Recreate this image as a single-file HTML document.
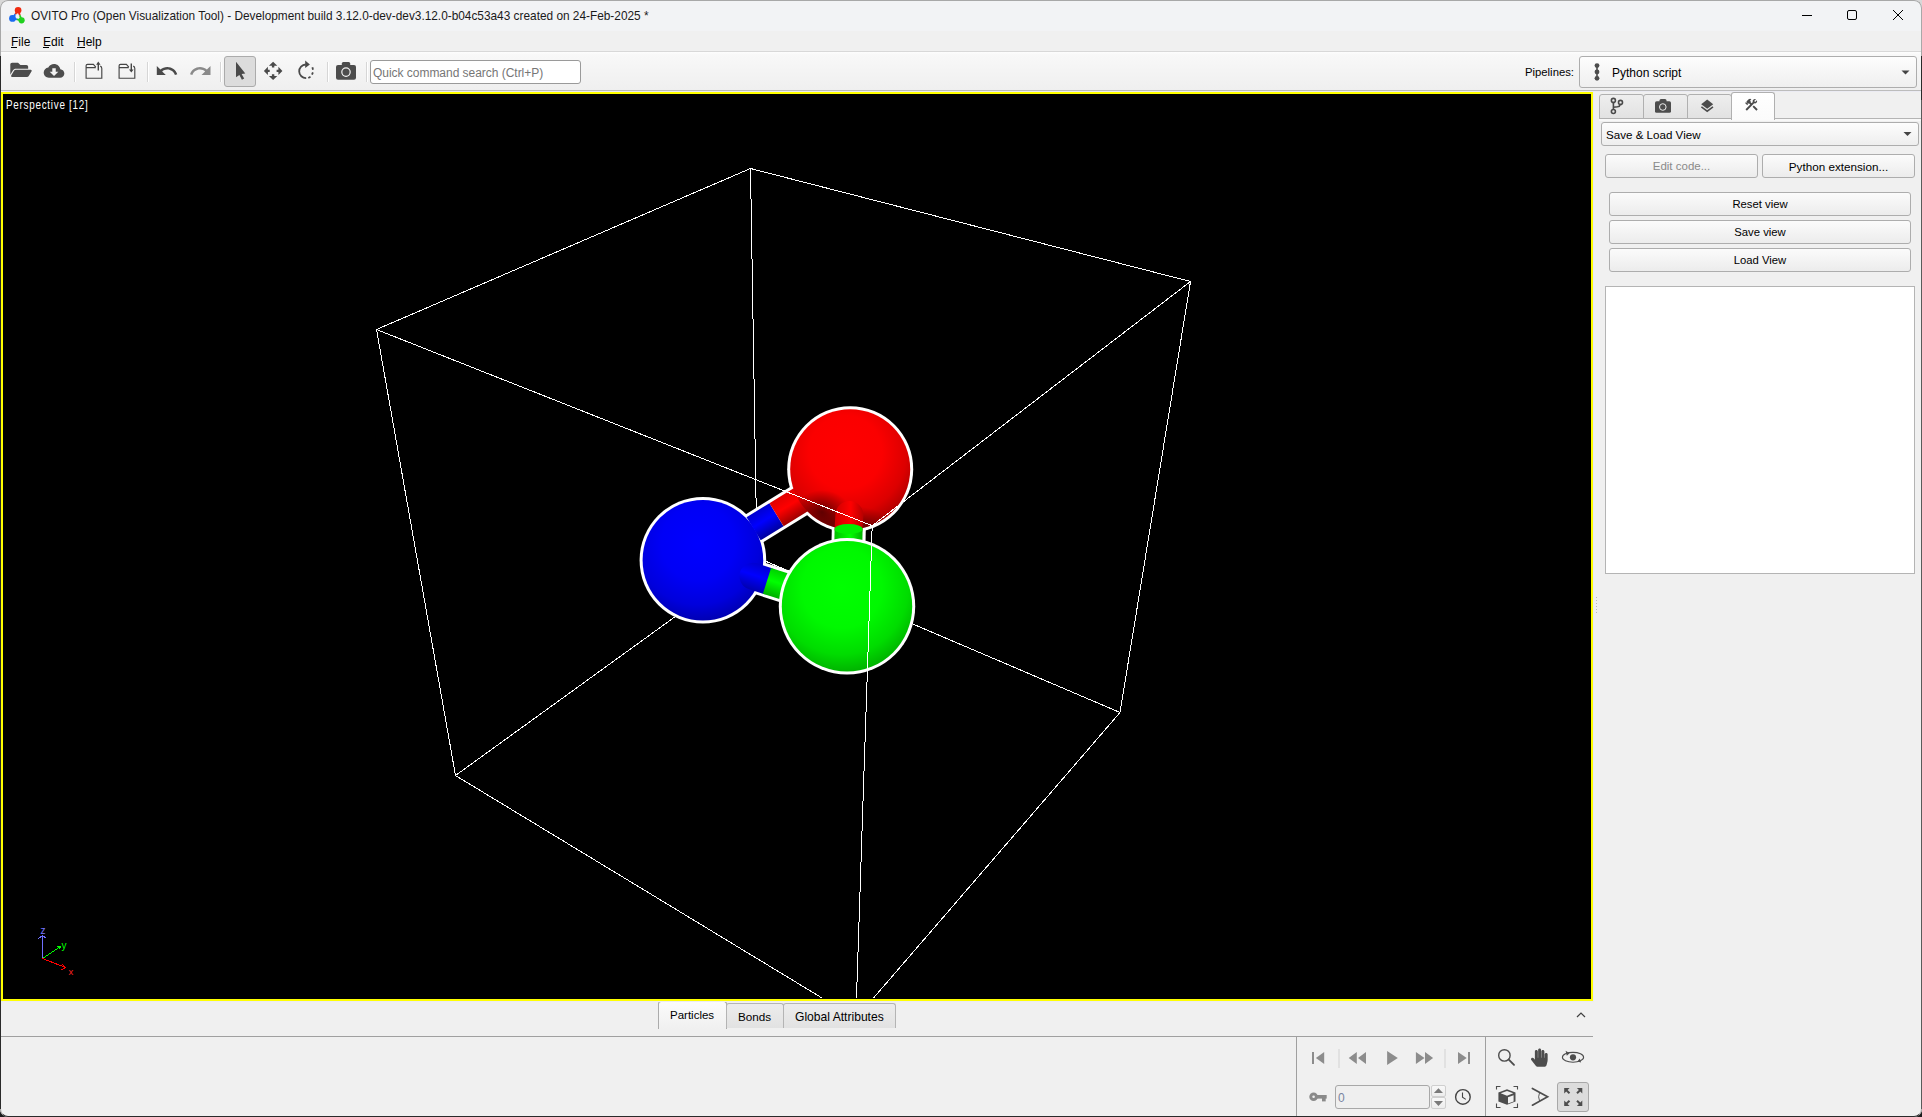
<!DOCTYPE html>
<html><head><meta charset="utf-8">
<style>
html,body{margin:0;padding:0;}
body{width:1922px;height:1117px;position:relative;overflow:hidden;background:#d8d8d8;font-family:"Liberation Sans",sans-serif;font-size:12px;color:#000;}
.a{position:absolute;}
.t{position:absolute;white-space:nowrap;line-height:1;}
#botbg{position:absolute;left:0;top:600px;width:1922px;height:517px;background:#1c1c1c;}
#win{position:absolute;left:0;top:0;width:1922px;height:1117px;border-radius:8px;overflow:hidden;background:#f0f0f0;}
#frame{position:absolute;left:0;top:0;width:1922px;height:1117px;box-sizing:border-box;border:1px solid #2a2a2a;border-top-color:#a8a8a8;border-left-color:#a8a8a8;border-right-color:#a8a8a8;border-radius:8px;pointer-events:none;}
.edgefix{position:absolute;left:0;top:8px;width:1px;height:48px;background:#a8a8a8;}
#title{position:absolute;left:0;top:0;width:1922px;height:31px;background:#f2f3f5;}
#menu{position:absolute;left:0;top:31px;width:1922px;height:20px;background:#f0f0f0;}
#tool{position:absolute;left:0;top:51px;width:1922px;height:39px;background:linear-gradient(#fdfdfd,#f8f8f8 3px,#efefef);border-top:1px solid #d8d8d8;box-sizing:border-box;}
.sep{position:absolute;width:1px;background:#d6d6d6;box-shadow:1px 0 0 #fff;}
.ul{position:absolute;height:1px;background:#000;}
svg{position:absolute;left:0;top:0;overflow:visible;}
.btn{position:absolute;box-sizing:border-box;border:1px solid #adadad;border-radius:3px;background:linear-gradient(#fbfbfb,#ececec);text-align:center;line-height:23px;}
.tab{position:absolute;height:25px;box-sizing:border-box;border:1px solid #b0b0b0;border-radius:3px 3px 0 0;background:linear-gradient(#eeeeee,#e2e2e2);}
</style></head><body>
<div id="botbg"></div>
<div id="win">
  <div id="title"></div>
  <div class="t" style="left:31px;top:11px;font-size:11.85px;color:#1a1a1a;">OVITO Pro (Open Visualization Tool) - Development build 3.12.0-dev-dev3.12.0-b04c53a43 created on 24-Feb-2025 *</div>
  <div id="menu"></div>
  <div class="t" style="left:11px;top:36px;">File</div>
  <div class="t" style="left:43px;top:36px;">Edit</div>
  <div class="t" style="left:77px;top:36px;">Help</div>
  <div class="ul" style="left:11px;top:47px;width:6px;"></div>
  <div class="ul" style="left:43px;top:47px;width:6px;"></div>
  <div class="ul" style="left:77px;top:47px;width:8px;"></div>
  <div id="tool"></div>
  <div class="a" style="left:0;top:90px;width:1922px;height:1px;background:#bcbcbc;"></div>
  <div class="a" style="left:0;top:91px;width:1922px;height:1px;background:#ebebf3;"></div>

  <!-- title bar icons -->
  <svg width="1922" height="40">
    <g stroke-width="1.8">
      <line x1="18.1" y1="10.3" x2="15.3" y2="14.35" stroke="#e83018"/>
      <line x1="15.3" y1="14.35" x2="12.5" y2="18.4" stroke="#1e6cf0"/>
      <line x1="18.1" y1="10.3" x2="19.85" y2="15.3" stroke="#e83018"/>
      <line x1="19.85" y1="15.3" x2="21.6" y2="20.3" stroke="#22cc22"/>
      <line x1="12.5" y1="18.4" x2="17" y2="19.35" stroke="#1e6cf0"/>
      <line x1="17" y1="19.35" x2="21.6" y2="20.3" stroke="#22cc22"/>
    </g>
    <circle cx="18.1" cy="10.3" r="3.3" fill="#f02a10"/>
    <circle cx="12.5" cy="18.4" r="3.4" fill="#1a6af0"/>
    <circle cx="21.6" cy="20.3" r="3.1" fill="#20d020"/>
    <g stroke="#000" stroke-width="1" fill="none">
      <line x1="1802" y1="15.5" x2="1812" y2="15.5"/>
      <rect x="1847.5" y="10.5" width="9" height="9" rx="1.5"/>
      <path d="M1893,10 L1903,20 M1903,10 L1893,20"/>
    </g>
  </svg>

  <!-- toolbar icons -->
  <svg width="1922" height="100">
    <g fill="#4d4d4d">
      <!-- open folder (FA folder-open) -->
      <g transform="translate(10.3,60.3) scale(0.0372)">
        <path d="M572.694 292.093L500.27 416.248A63.997 63.997 0 0 1 444.989 448H45.025c-18.523 0-30.064-20.093-20.731-36.093l72.424-124.155A64 64 0 0 1 152 256h399.964c18.523 0 30.064 20.093 20.73 36.093zM152 224h328v-48c0-26.51-21.49-48-48-48H272l-64-64H48C21.49 64 0 85.49 0 112v278.046l69.077-118.418C86.214 242.25 117.989 224 152 224z"/>
      </g>
      <!-- cloud download -->
      <g transform="translate(43.7,60.5) scale(0.86)">
        <path d="M19.35 10.04C18.67 6.59 15.64 4 12 4 9.11 4 6.6 5.64 5.35 8.04 2.34 8.36 0 10.91 0 14c0 3.31 2.69 6 6 6h13c2.76 0 5-2.24 5-5 0-2.64-2.05-4.78-4.65-4.96zM17 13l-5 5-5-5h3V9h4v4h3z"/>
      </g>
    </g>
    <g stroke="#454545" stroke-width="1.15" fill="none">
      <path transform="translate(0,0)" d="M95.8,67.6 H86.1 V78.2 H101.8 V68.6 Q101.8,66.6 100.2,66.1 M86.1,67.6 V65.8 Q86.1,64.4 87.5,64.4 H93.4 L95.8,67.2"/>
      <path transform="translate(33,0)" d="M95.8,67.6 H86.1 V78.2 H101.8 V68.6 Q101.8,66.6 100.2,66.1 M86.1,67.6 V65.8 Q86.1,64.4 87.5,64.4 H93.4 L95.8,67.2"/>
      <path d="M98.3,70.6 V63.5" stroke-width="1.4"/>
      <path d="M131.3,63.6 V70.5" stroke-width="1.4"/>
    </g>
    <g fill="#454545">
      <path d="M98.3,61.6 L96.1,64.8 H100.5 Z"/>
      <path d="M131.3,72.6 L129,69.4 H133.6 Z"/>
    </g>
    <!-- undo / redo -->
    <g transform="translate(154.8,59)" fill="#4a4a4a"><path d="M12.5 8c-2.65 0-5.05.99-6.9 2.6L2 7v9h9l-3.62-3.62c1.39-1.16 3.16-1.88 5.12-1.88 3.54 0 6.55 2.31 7.6 5.5l2.37-.78C21.08 11.03 17.15 8 12.5 8z"/></g>
    <g transform="translate(188.5,59)" fill="#8a8a8a"><path d="M18.4 10.6C16.55 8.99 14.15 8 11.5 8c-4.65 0-8.58 3.03-9.96 7.22L3.9 16c1.05-3.19 4.05-5.5 7.6-5.5 1.95 0 3.73.72 5.12 1.88L13 16h9V7l-3.6 3.6z"/></g>
    <!-- select arrow -->
    <path d="M236,61.8 L245.3,73.6 L241.6,73.9 L244.2,78.6 L241.9,79.7 L239.4,74.9 L236,77.2 Z" fill="#4a4a4a"/>
    <!-- move -->
    <g fill="#4a4a4a">
      <path d="M273.1,61.8 L277.3,65.8 L274.3,65.8 L274.3,67.6 L271.9,67.6 L271.9,65.8 L268.9,65.8 Z"/>
      <path d="M273.1,80 L277.3,76 L274.3,76 L274.3,74.2 L271.9,74.2 L271.9,76 L268.9,76 Z"/>
      <path d="M263.9,70.9 L267.9,66.7 L267.9,69.7 L269.7,69.7 L269.7,72.1 L267.9,72.1 L267.9,75.1 Z"/>
      <path d="M282.4,70.9 L278.4,66.7 L278.4,69.7 L276.6,69.7 L276.6,72.1 L278.4,72.1 L278.4,75.1 Z"/>
    </g>
    <!-- rotate -->
    <g stroke="#4a4a4a" stroke-width="1.8" fill="none">
      <path d="M305.8,64.5 A6.6,6.6 0 1 0 306.2,78.1"/>
      <path d="M308.3,78 L310.5,76.8 M312,74.7 L312.9,72.4 M313,69.7 L312.4,67.3" />
    </g>
    <path d="M305.2,60.6 L309.9,64.5 L305.2,68 Z" fill="#4a4a4a"/>
    <!-- camera -->
    <g fill="#4d4d4d">
      <rect x="336" y="64.9" width="20" height="14.8" rx="2"/>
      <path d="M341.8,65.5 V63.5 Q341.8,62 343.3,62 H348.7 Q350.2,62 350.2,63.5 V65.5 Z"/>
    </g>
    <circle cx="346" cy="72.1" r="4.2" fill="none" stroke="#f4f4f4" stroke-width="1.2"/>
  </svg>
  <div class="sep" style="left:74px;top:62px;height:20px;"></div>
  <div class="sep" style="left:147px;top:62px;height:20px;"></div>
  <div class="sep" style="left:220px;top:62px;height:20px;"></div>
  <div class="sep" style="left:327px;top:62px;height:20px;"></div>
  <div class="sep" style="left:366px;top:62px;height:20px;"></div>
  <div class="a" style="left:224px;top:56px;width:32px;height:31px;box-sizing:border-box;border:1px solid #ababab;border-radius:3px;background:#dcdcdc;"></div>
  <svg width="1922" height="100"><path d="M236,61.8 L245.3,73.6 L241.6,73.9 L244.2,78.6 L241.9,79.7 L239.4,74.9 L236,77.2 Z" fill="#4a4a4a"/></svg>

  <!-- search box -->
  <div class="a" style="left:370px;top:60px;width:211px;height:24px;box-sizing:border-box;border:1px solid #9a9a9a;border-radius:3px;background:#fff;"></div>
  <div class="t" style="left:373px;top:67px;font-size:12px;color:#767676;letter-spacing:-0.03px;">Quick command search (Ctrl+P)</div>

  <!-- pipelines -->
  <div class="t" style="left:1525px;top:67px;font-size:11.3px;">Pipelines:</div>
  <div class="a" style="left:1579px;top:56px;width:338px;height:32px;box-sizing:border-box;border:1px solid #adadad;border-radius:3px;background:linear-gradient(#fdfdfd,#efefef);"></div>
  <svg width="1922" height="100">
    <g fill="#4d4d4d"><circle cx="1597" cy="65.6" r="2.4"/><circle cx="1597" cy="71.9" r="2.4"/><circle cx="1597" cy="78.3" r="2.4"/><rect x="1596.2" y="65.6" width="1.6" height="12.7"/></g>
    <path d="M1901.5,70.5 L1909.5,70.5 L1905.5,74.5 Z" fill="#444"/>
  </svg>
  <div class="t" style="left:1612px;top:67px;font-size:12px;">Python script</div>

  <!-- viewport -->
  <div class="a" style="left:1px;top:92px;width:1592px;height:909px;border:2px solid #ffff00;box-sizing:border-box;background:#000;"></div>


  <svg width="1922" height="1117" style="clip-path:inset(94px 332px 119px 3px);">
    <defs><linearGradient id="bRB_b" gradientUnits="userSpaceOnUse" x1="769.5" y1="503.2" x2="783.6" y2="526.2"><stop offset="0" stop-color="#0000d0"/><stop offset="0.45" stop-color="#0000ff"/><stop offset="1" stop-color="#0000a0"/></linearGradient><linearGradient id="bRB_r" gradientUnits="userSpaceOnUse" x1="769.5" y1="503.2" x2="783.6" y2="526.2"><stop offset="0" stop-color="#e00000"/><stop offset="0.45" stop-color="#ff0000"/><stop offset="1" stop-color="#a00000"/></linearGradient><linearGradient id="bRG_r" gradientUnits="userSpaceOnUse" x1="862.6" y1="538.1" x2="834.6" y2="537.4"><stop offset="0" stop-color="#b80000"/><stop offset="0.45" stop-color="#ff0000"/><stop offset="1" stop-color="#d00000"/></linearGradient><linearGradient id="bRG_g" gradientUnits="userSpaceOnUse" x1="862.6" y1="538.1" x2="834.6" y2="537.4"><stop offset="0" stop-color="#00b000"/><stop offset="0.45" stop-color="#00ff00"/><stop offset="1" stop-color="#00c000"/></linearGradient><linearGradient id="bBG_b" gradientUnits="userSpaceOnUse" x1="779.1" y1="570.4" x2="770.8" y2="596.1"><stop offset="0" stop-color="#0000d0"/><stop offset="0.45" stop-color="#0000ff"/><stop offset="1" stop-color="#0000b0"/></linearGradient><linearGradient id="bBG_g" gradientUnits="userSpaceOnUse" x1="779.1" y1="570.4" x2="770.8" y2="596.1"><stop offset="0" stop-color="#00d000"/><stop offset="0.45" stop-color="#00ff00"/><stop offset="1" stop-color="#00b000"/></linearGradient><radialGradient id="gR" cx="0.46" cy="0.36" r="0.68"><stop offset="0" stop-color="#ff0000"/><stop offset="0.45" stop-color="#fb0000"/><stop offset="0.75" stop-color="#dc0000"/><stop offset="1" stop-color="#a00000"/></radialGradient><radialGradient id="gB" cx="0.46" cy="0.36" r="0.68"><stop offset="0" stop-color="#0000ff"/><stop offset="0.45" stop-color="#0000f6"/><stop offset="0.75" stop-color="#0000dc"/><stop offset="1" stop-color="#0000a8"/></radialGradient><radialGradient id="gG" cx="0.46" cy="0.36" r="0.68"><stop offset="0" stop-color="#00ff00"/><stop offset="0.45" stop-color="#00f800"/><stop offset="0.75" stop-color="#00dc00"/><stop offset="1" stop-color="#00a800"/></radialGradient>
      <radialGradient id="ao" cx="0.5" cy="0.5" r="0.5"><stop offset="0" stop-color="#000" stop-opacity="0.55"/><stop offset="1" stop-color="#000" stop-opacity="0"/></radialGradient>
    </defs>
    <g stroke="#fff" stroke-width="1" shape-rendering="crispEdges"><line x1="750.5" y1="168.5" x2="1190.5" y2="281.5"/><line x1="750.5" y1="168.5" x2="376.5" y2="329.5"/><line x1="376.5" y1="329.5" x2="455.5" y2="775.5"/><line x1="1190.5" y1="281.5" x2="1120" y2="712.5"/><line x1="750.5" y1="168.5" x2="757" y2="557.5"/><line x1="455.5" y1="775.5" x2="757" y2="557.5"/><line x1="1120" y1="712.5" x2="757" y2="557.5"/><line x1="455.5" y1="775.5" x2="855.8" y2="1018.5"/><line x1="1120" y1="712.5" x2="855.8" y2="1018.5"/></g>
    <!-- outlines (back atoms + bonds) -->
    <g fill="#fff" stroke="#fff">
      <line x1="702.9" y1="560.2" x2="850.2" y2="469.2" stroke-width="33"/>
      <line x1="850.2" y1="469.2" x2="847" y2="606.3" stroke-width="34"/>
      <line x1="702.9" y1="560.2" x2="847" y2="606.3" stroke-width="33"/>
      <circle cx="850.2" cy="469.2" r="63" stroke="none"/>
      <circle cx="702.9" cy="560.2" r="63.3" stroke="none"/>
    </g>
    <circle cx="702.9" cy="560.2" r="60.3" fill="url(#gB)"/>
    <line x1="753.6" y1="528.7" x2="776.5" y2="514.7" stroke="url(#bRB_b)" stroke-width="27"/>
    <line x1="776.5" y1="514.7" x2="850.2" y2="469.2" stroke="url(#bRB_r)" stroke-width="27"/>
    <circle cx="850.2" cy="469.2" r="60" fill="url(#gR)"/>
    <!-- AO shadows on red near bonds -->
    <clipPath id="cR"><circle cx="850.2" cy="469.2" r="60"/></clipPath>
    <g clip-path="url(#cR)">
      <ellipse cx="822" cy="512" rx="28" ry="22" fill="url(#ao)"/>
      <ellipse cx="852" cy="532" rx="46" ry="26" fill="url(#ao)"/>
    </g>
    <!-- bonds -->
    <line x1="849.4" y1="515" x2="848.6" y2="528" stroke="url(#bRG_r)" stroke-width="28" stroke-linecap="round"/>
    <line x1="848.6" y1="529" x2="847" y2="606.3" stroke="url(#bRG_g)" stroke-width="28"/>
    <ellipse cx="848.6" cy="529" rx="14" ry="5" fill="#00f000"/>
    <line x1="752.9" y1="576.2" x2="767" y2="580.8" stroke="url(#bBG_b)" stroke-width="27" stroke-linecap="round"/>
    <line x1="767" y1="580.8" x2="847" y2="606.3" stroke="url(#bBG_g)" stroke-width="27"/>
    <!-- front atom -->
    <circle cx="847" cy="606.3" r="68.2" fill="#fff"/>
    <circle cx="847" cy="606.3" r="65.2" fill="url(#gG)"/>
    <g stroke="#fff" stroke-width="1" shape-rendering="crispEdges"><line x1="376.5" y1="329.5" x2="872.2" y2="525.7"/><line x1="1190.5" y1="281.5" x2="872.2" y2="525.7"/><line x1="872.2" y1="525.7" x2="855.8" y2="1018.5"/></g>
  </svg>

  <!-- axis tripod -->
  <svg width="1922" height="1117">
    <g stroke-width="1" fill="none" shape-rendering="crispEdges">
      <path d="M42.5,958.5 V935.5 M38.5,938.5 L42.5,935.5 L46.5,938.5" stroke="#7070ff"/>
      <path d="M42.5,958.5 L60.5,946.5 M57,946 L60.5,946.5 L59.5,949.5" stroke="#00ff00"/>
      <path d="M42.5,958.5 L65.5,967.5 M62.5,964.5 L65.5,967.5 L61.5,970" stroke="#ff0000"/>
    </g>
    <text x="40.6" y="934.2" font-size="10" fill="#7878ff" font-family="Liberation Sans">z</text>
    <text x="61.5" y="949" font-size="10" fill="#00ff00" font-family="Liberation Sans">y</text>
    <text x="68.5" y="975" font-size="9.5" fill="#ff2020" font-family="Liberation Sans">x</text>
  </svg>
  <div class="t" style="left:6px;top:99px;font-size:12.2px;color:#fff;letter-spacing:0.9px;transform:scaleX(0.81);transform-origin:0 0;">Perspective [12]</div>


  <!-- ===== right panel ===== -->
  <div class="a" style="left:1593px;top:92px;width:1px;height:909px;background:#ebebf3;"></div>
  <div class="a" style="left:1599px;top:118px;width:1322px;height:1px;background:#b4b4b4;"></div>
  <div class="a" style="left:1599px;top:119px;width:1321px;height:2px;background:#f8f8f8;"></div>
  <div class="tab" style="left:1599px;top:94px;width:45px;"></div>
  <div class="tab" style="left:1643px;top:94px;width:45px;"></div>
  <div class="tab" style="left:1687px;top:94px;width:45px;"></div>
  <div class="a" style="left:1731px;top:92px;width:44px;height:28px;box-sizing:border-box;border:1px solid #b0b0b0;border-bottom:none;border-radius:3px 3px 0 0;background:linear-gradient(#ffffff,#fbfbfb);"></div>
  <svg width="1922" height="200">
    <!-- pipeline branch icon -->
    <g stroke="#4a4a4a" stroke-width="1.6" fill="none">
      <circle cx="1613.4" cy="100.4" r="2"/>
      <circle cx="1613.4" cy="111.5" r="2"/>
      <circle cx="1620.5" cy="102.4" r="2"/>
      <path d="M1613.4,102.4 V109.5 M1613.6,107.3 L1617.5,106.8 Q1620,106.4 1620.3,104.4"/>
    </g>
    <!-- camera -->
    <g fill="#4d4d4d">
      <rect x="1655" y="101.2" width="16" height="11.6" rx="1.6"/>
      <path d="M1659.5,102 V100.6 Q1659.5,99 1661,99 H1665 Q1666.5,99 1666.5,100.6 V102 Z"/>
    </g>
    <circle cx="1662.8" cy="107" r="3.3" fill="none" stroke="#ececec" stroke-width="1"/>
    <!-- layers -->
    <path d="M1707.2,99.6 L1713.2,104.2 L1707.2,108.8 L1701.2,104.2 Z" fill="#4d4d4d"/>
    <path d="M1701.4,106.8 L1707.2,111.2 L1713,106.8" fill="none" stroke="#4d4d4d" stroke-width="1.5"/>
    <!-- tools (construction) -->
    <g transform="translate(1743.7,97.1) scale(0.64)" fill="#4a4a4a"><path d="M13.78 15.17l2.12-2.12 6.01 6.01-2.12 2.12zM17.5 10c1.93 0 3.5-1.57 3.5-3.5 0-.58-.16-1.12-.41-1.6l-2.7 2.7-1.49-1.49 2.7-2.7c-.48-.25-1.020-.41-1.6-.41C15.57 3 14 4.570 14 6.5c0 .41.08.8.21 1.16l-1.85 1.85-1.78-1.78.71-.71-1.41-1.41L12 3.49c-1.17-1.17-3.07-1.170-4.24 0L4.22 7.03l1.41 1.41H2.81l-.71.71 3.54 3.54.71-.71V9.15l1.410 1.41.71-.71 1.78 1.78-7.41 7.41 2.12 2.12L16.34 9.79c.36.13.75.21 1.16.21z"/></g>
  </svg>
  <div class="a" style="left:1601px;top:122px;width:318px;height:24px;box-sizing:border-box;border:1px solid #adadad;border-radius:3px;background:linear-gradient(#fdfdfd,#eeeeee);"></div>
  <div class="t" style="left:1606px;top:129px;font-size:11.6px;">Save &amp; Load View</div>
  <svg width="1922" height="200"><path d="M1903.5,132 L1911.5,132 L1907.5,136 Z" fill="#444"/></svg>
  <div class="btn" style="left:1605px;top:154px;width:153px;height:24px;color:#8a8a8a;font-size:11.5px;">Edit code...</div>
  <div class="btn" style="left:1762px;top:154px;width:153px;height:24px;font-size:11.7px;">Python extension...</div>
  <div class="btn" style="left:1609px;top:192px;width:302px;height:24px;font-size:11.3px;">Reset view</div>
  <div class="btn" style="left:1609px;top:220px;width:302px;height:24px;font-size:11.3px;">Save view</div>
  <div class="btn" style="left:1609px;top:248px;width:302px;height:24px;font-size:11.3px;">Load View</div>
  <div class="a" style="left:1605px;top:286px;width:310px;height:288px;box-sizing:border-box;border:1px solid #b4b4b4;background:#fff;"></div>
  <div class="a" style="left:1596px;top:597px;width:1px;height:18px;background:repeating-linear-gradient(#b8b8b8 0 1px,transparent 1px 3px);"></div>

  <!-- ===== bottom area ===== -->
  <div class="a" style="left:658px;top:1001px;width:69px;height:28px;box-sizing:border-box;border:1px solid #ababab;border-bottom:none;border-radius:3px 3px 0 0;background:linear-gradient(#fbfbfb,#f0f0f0);"></div>
  <div class="a" style="left:726px;top:1003px;width:58px;height:25px;box-sizing:border-box;border:1px solid #b4b4b4;border-bottom:none;border-radius:3px 3px 0 0;background:linear-gradient(#ececec,#e2e2e2);"></div>
  <div class="a" style="left:783px;top:1003px;width:113px;height:25px;box-sizing:border-box;border:1px solid #b4b4b4;border-bottom:none;border-radius:3px 3px 0 0;background:linear-gradient(#ececec,#e2e2e2);"></div>
  <div class="t" style="left:670px;top:1010px;font-size:11.5px;">Particles</div>
  <div class="t" style="left:738px;top:1011px;font-size:11.7px;">Bonds</div>
  <div class="t" style="left:795px;top:1011px;font-size:12.1px;">Global Attributes</div>
  <div class="a" style="left:1296px;top:1037px;width:1px;height:79px;background:#a0a0a0;"></div>
  <div class="a" style="left:1485px;top:1037px;width:1px;height:79px;background:#a0a0a0;"></div>
  <div class="a" style="left:1335px;top:1085px;width:95px;height:24px;box-sizing:border-box;border:1px solid #a8a8a8;border-radius:3px;background:#efefef;"></div>
  <div class="t" style="left:1338px;top:1092px;font-size:12px;color:#7884a0;">0</div>
  <div class="a" style="left:1431px;top:1085px;width:15px;height:12px;box-sizing:border-box;border:1px solid #cfcfcf;border-radius:2px;background:linear-gradient(#f8f8f8,#ededed);"></div>
  <div class="a" style="left:1431px;top:1097px;width:15px;height:12px;box-sizing:border-box;border:1px solid #cfcfcf;border-radius:2px;background:linear-gradient(#f8f8f8,#ededed);"></div>
  <div class="a" style="left:1557px;top:1082px;width:32px;height:30px;box-sizing:border-box;border:1px solid #a8a8a8;border-radius:3px;background:#dcdcdc;"></div>
  <svg width="1922" height="1117">
    <path d="M1577,1017 L1581,1013 L1585,1017" fill="none" stroke="#404040" stroke-width="1.2"/>
    <g fill="#8c8c8c">
      <rect x="1312" y="1052" width="2" height="12"/>
      <path d="M1315.9,1058 L1324.2,1052 V1064 Z"/>
      <path d="M1348.7,1058 L1356.8,1052 V1064 Z M1358,1058 L1366,1052 V1064 Z"/>
      <path d="M1397.8,1058 L1387.1,1051 V1065 Z"/>
      <path d="M1424.5,1058 L1415.9,1052 V1064 Z M1433.1,1058 L1425,1052 V1064 Z"/>
      <path d="M1466.7,1058 L1458,1052 V1064 Z"/>
      <rect x="1468" y="1052" width="2" height="12"/>
    </g>
    <g fill="#d2d2d2"><rect x="1338.5" y="1049" width="1" height="19"/><rect x="1444.5" y="1049" width="1" height="19"/></g>
    <!-- magnifier -->
    <circle cx="1504.4" cy="1055.4" r="5.7" fill="none" stroke="#4d4d4d" stroke-width="1.4"/>
    <path d="M1508.8,1059.6 L1514,1064.8" stroke="#4d4d4d" stroke-width="1.9" stroke-linecap="round"/>
    <!-- hand -->
    <g transform="translate(1531,1048.6) scale(0.0372,0.0353)" fill="#4d4d4d"><path d="M408.781 128.007C386.356 127.578 368 146.36 368 168.79V256h-8V79.79c0-22.430-18.356-41.212-40.781-40.783C297.488 39.423 280 57.169 280 79v177h-8V40.79C272 18.360 253.644-.422 231.219.007 209.488.423 192 18.169 192 40v216h-8V80.790c0-22.430-18.356-41.212-40.781-40.783C121.488 40.423 104 58.169 104 80v235.992l-31.648-43.519c-12.993-17.866-38.009-21.817-55.877-8.823-17.865 12.994-21.815 38.010-8.822 55.877l125.601 172.705A48 48 0 0 0 172.073 512h197.590c22.274 0 41.622-15.324 46.724-37.006l26.508-112.660a192.011 192.011 0 0 0 5.104-43.975V168c.001-21.831-17.487-39.577-39.218-39.993z"/></g>
    <!-- orbit eye -->
    <ellipse cx="1573" cy="1057.3" rx="10.6" ry="4.9" fill="none" stroke="#4d4d4d" stroke-width="1.1"/>
    <circle cx="1573" cy="1057.3" r="3.1" fill="#4d4d4d"/>
    <path d="M1565.6,1050.8 L1569.6,1053.3 L1566.8,1055.8 Z M1579.8,1058.4 L1581.1,1062.6 L1577.4,1061.4 Z" fill="#4d4d4d"/>
    <!-- key -->
    <g fill="#8a8a8a">
      <circle cx="1313.6" cy="1096.7" r="4.3"/>
      <rect x="1315" y="1095" width="11.7" height="3.6"/>
      <rect x="1322" y="1097" width="3.7" height="4.4"/>
    </g>
    <circle cx="1313.6" cy="1096.7" r="1.3" fill="#f0f0f0"/>
    <!-- spinner arrows -->
    <path d="M1433.9,1093 L1443,1093 L1438.45,1088.3 Z M1433.9,1101 L1443,1101 L1438.45,1105.9 Z" fill="#7a7a7a"/>
    <!-- clock -->
    <circle cx="1462.9" cy="1096.9" r="7.3" fill="none" stroke="#444" stroke-width="1.4"/>
    <path d="M1462.5,1092.6 V1097.2 L1465.8,1099.4" fill="none" stroke="#444" stroke-width="1.1"/>
    <!-- zoom scene extents -->
    <g stroke="#4d4d4d" stroke-width="1.1" fill="none">
      <path d="M1496.5,1089.5 V1086.5 H1500.5 M1513.5,1086.5 H1517.5 V1089.5 M1496.5,1103.5 V1107.5 H1500.5 M1517.5,1103.5 V1107.5 H1513.5"/>
    </g>
    <path d="M1507,1089.3 L1515.5,1092.5 V1101.6 L1507,1104.8 L1498.4,1101.6 V1092.5 Z" fill="#4d4d4d"/>
    <path d="M1500.7,1093.3 L1507,1090.9 L1513.3,1093.3 L1507,1095.7 Z M1508,1097.3 L1513.6,1095.2 V1101.4 L1508,1103.4 Z" fill="#f0f0f0"/>
    <!-- FOV -->
    <path d="M1532.4,1088.4 L1547.6,1096.8 L1532.4,1105.2" fill="none" stroke="#4d4d4d" stroke-width="1.7" stroke-linecap="round"/>
    <path d="M1539.6,1092.6 Q1537.6,1096.8 1539.6,1101" fill="none" stroke="#4d4d4d" stroke-width="0.9"/>
    <!-- maximize arrows -->
    <g fill="#4d4d4d">
      <path d="M1564.2,1088 H1569.6 L1567.6,1090 L1570.2,1092.6 L1568.8,1094 L1566.2,1091.4 L1564.2,1093.4 Z"/>
      <path d="M1582.3,1088 H1576.9 L1578.9,1090 L1576.3,1092.6 L1577.7,1094 L1580.3,1091.4 L1582.3,1093.4 Z"/>
      <path d="M1564.2,1106 H1569.6 L1567.6,1104 L1570.2,1101.4 L1568.8,1100 L1566.2,1102.6 L1564.2,1100.6 Z"/>
      <path d="M1582.3,1106 H1576.9 L1578.9,1104 L1576.3,1101.4 L1577.7,1100 L1580.3,1102.6 L1582.3,1100.6 Z"/>
    </g>
  </svg>

  <div class="a" style="left:1px;top:1001px;width:1593px;height:1px;background:#ebebf3;"></div>
  <!-- bottom line -->
  <div class="a" style="left:1px;top:1036px;width:1592px;height:1px;background:#a0a0a0;"></div>
</div>
<div id="frame"></div>
<div class="a" style="left:0;top:56px;width:1px;height:1053px;background:#2a2a2a;"></div>
<div class="a" style="left:1921px;top:100px;width:1px;height:1009px;background:#5a5a5a;"></div>
<div class="a" style="left:1921px;top:56px;width:1px;height:44px;background:#2a2a2a;"></div>
</body></html>
